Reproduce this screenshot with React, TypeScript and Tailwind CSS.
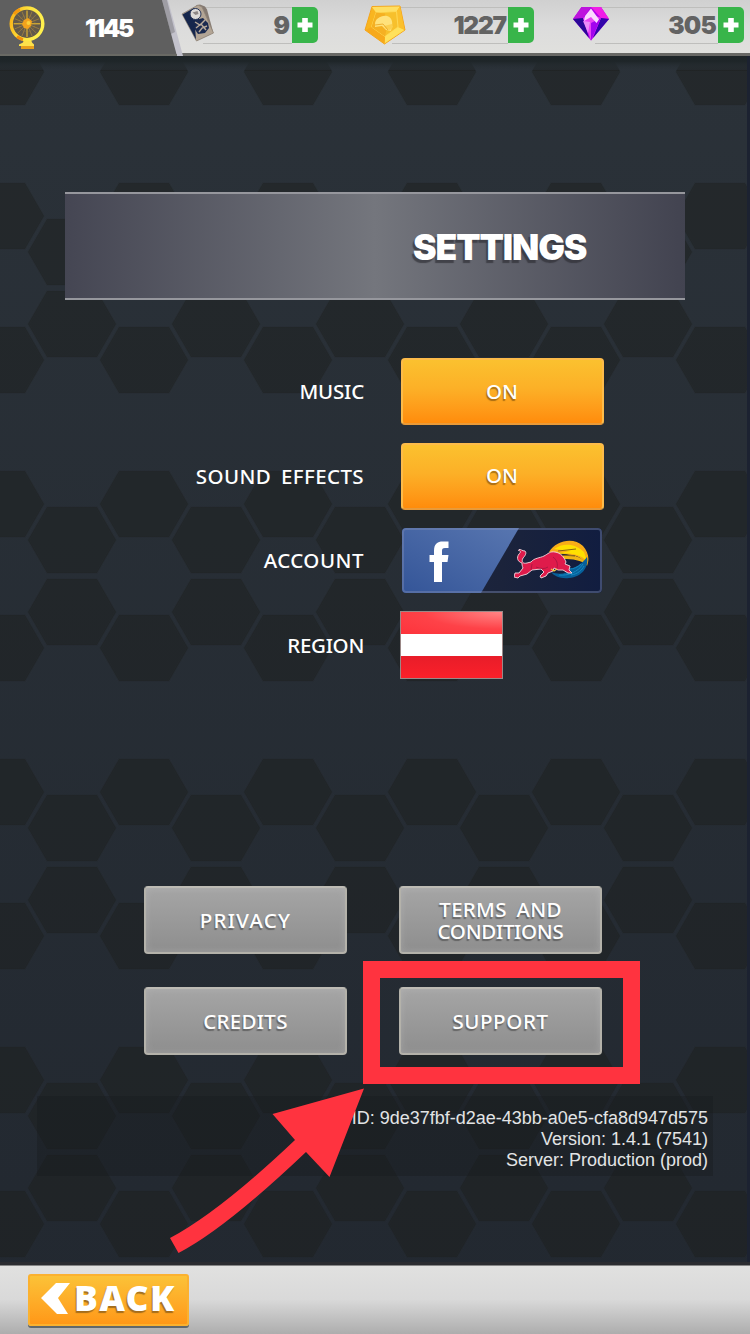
import React from "react";

const HEX = "-44,0 -25,-33 25,-33 44,0 25,33 -25,33";
const HEX_CENTRES = [
  [0, 72], [144, 72], [0, 216], [144, 216], [72, 36], [72, 252],
];

function HexBackdrop() {
  return (
    <svg className="absolute inset-0 h-full w-full" width="750" height="1334">
      <defs>
        <linearGradient id="base" x1="0" y1="0" x2="0" y2="1">
          <stop offset="0" stopColor="#2b3239" />
          <stop offset="1" stopColor="#222830" />
        </linearGradient>
        <linearGradient id="topShade" x1="0" y1="0" x2="0" y2="1">
          <stop offset="0" stopColor="#1d2427" />
          <stop offset="0.4" stopColor="#1f2629" />
          <stop offset="1" stopColor="#2b3239" stopOpacity="0" />
        </linearGradient>
        <pattern id="hex" width="144" height="288" patternUnits="userSpaceOnUse">
          {HEX_CENTRES.map(([x, y], i) => (
            <polygon key={i} points={HEX} transform={`translate(${x} ${y})`} fill="#1b1e1b" fillOpacity="0.44" stroke="#1b1e1b" strokeOpacity="0.08" strokeWidth="2" />
          ))}
        </pattern>
      </defs>
      <rect width="750" height="1334" fill="url(#base)" />
      <rect y="70" width="750" height="1264" fill="url(#hex)" />
      {[0, 144, 288, 432, 576, 720].map((x) => (
        <path key={x} d={`M${x - 44} 71L${x - 35} 56H${x + 35}L${x + 44} 71z`} fill="#1b1e1b" fillOpacity="0.44" />
      ))}
      <rect y="55" width="750" height="16" fill="url(#topShade)" />
      <rect x="747" width="3" height="1334" fill="#1c2231" />
    </svg>
  );
}

function WheelIcon() {
  const spokes = Array.from({ length: 16 }, (_, i) => i * 22.5);
  return (
    <svg width="36" height="44" viewBox="0 0 36 44">
      <defs>
        <linearGradient id="gold" x1="0" y1="0" x2="1" y2="0.3">
          <stop offset="0" stopColor="#f9ae13" />
          <stop offset="0.5" stopColor="#fde13c" />
          <stop offset="1" stopColor="#fff04d" />
        </linearGradient>
      </defs>
      <path d="M15 34h7l1 4 2 1v4H12v-4l2-1z" fill="#e8a01d" />
      <path d="M15 34h7l1 2.500 2 2v1.500H10v-1.500l4-2z" fill="#fde14b" />
      <circle cx="18" cy="17.8" r="15.8" fill="#62594a" stroke="url(#gold)" strokeWidth="3.4" />
      {spokes.map((a) => (
        <path key={a} d="M18 17.8V4.5" stroke={a % 90 === 0 ? "#f8c52d" : "#b08b3d"} strokeWidth={a % 90 === 0 ? 1 : 0.6} transform={`rotate(${a} 18 17.8)`} />
      ))}
      <circle cx="18" cy="17.8" r="8" fill="none" stroke="#a58542" strokeWidth="0.6" strokeDasharray="1 1" />
      <path d="M15 14l4-2 4 3-1 5-3 3-4-1-2-4z" fill="#f2a21c" />
      <circle cx="19.5" cy="17" r="2" fill="#fbd03a" />
      <path d="M8 30.500a16 16 0 0 0 6 3" stroke="#f08c0b" strokeWidth="3" fill="none" />
      <path d="M5 8a16 16 0 0 1 6-4.500" stroke="#f6980c" strokeWidth="3" fill="none" />
    </svg>
  );
}

function CardIcon() {
  return (
    <svg width="36" height="40" viewBox="0 0 36 40">
      <path d="M15 2.500l4-1 5 2 2 3 6 22-3 3-13 6z" fill="#857a72" />
      <path d="M1 11L17 2l4 2L32.500 30 15.500 38z" fill="#b3a595" stroke="#8f8477" strokeWidth="0.800" strokeLinejoin="round" />
      <path d="M1.500 11.500L13 5l4 8 2 8-5 3 1 12.500z" fill="#15264c" />
      <circle cx="14.500" cy="11" r="5.500" fill="#dcdad8" stroke="#243357" />
      <path d="M11.500 9.500l5-1.500 1 3-3 1z" fill="#8d8786" />
      <path d="M15 17l7-2 5 5 1 5-4 5-7 1-4-6 2-3z" fill="#1b2a4f" />
      <path d="M14 19l5 3 5-5M15 25l5-4 5 6M18 29l3-4 5-2" fill="none" stroke="#b8aa9b" strokeWidth="1.400" />
    </svg>
  );
}

function CoinIcon() {
  return (
    <svg width="42" height="40" viewBox="0 0 42 40">
      <path d="M8 1.500L36 1l5 24-20.500 14L1 25z" fill="#f9b51f" stroke="#f5a51c" strokeLinejoin="round" />
      <path d="M8 2l28-.5-3.500 5-20.500 1z" fill="#ffdf63" />
      <path d="M36 1.500l4.500 23-6.500-2.500-1.500-15.500z" fill="#fbc02d" />
      <path d="M40.500 25L20.500 38.500l.5-7L34 22z" fill="#ffe15c" />
      <path d="M1.500 25l19 13.500.5-7L7.500 22z" fill="#f7a91c" />
      <path d="M12 7.500l20.500-1L34 22l-13 9.500L7.500 22z" fill="#f7c02c" stroke="#ffdf62" strokeWidth="0.800" />
      <path d="M12 7.500l9 1 2 14-2 9L7.500 22z" fill="#f5b022" />
      <path d="M11 19c0-5 6-9 12-8 4 1 6 5 5 10l-1 5-5-1-4-4-7 1z" fill="#ffe27b" />
      <path d="M20 21l8-2 1 3-3 3-4-1z" fill="#fbcf50" />
      <path d="M11 20l8-1 5 6" fill="none" stroke="#e9a321" strokeWidth="0.800" />
    </svg>
  );
}

function GemIcon() {
  return (
    <svg width="36" height="35" viewBox="0 0 36 35">
      <path d="M8.500 1L28 1l8 12-18 21.500L0 13z" fill="#b400ea" />
      <path d="M8.500 1L18 1l-8 11-10 1z" fill="#bd15dd" />
      <path d="M28 1l8 12-8-1L18 1z" fill="#f01de6" />
      <path d="M0 13l10-1 6 20z" fill="#2b0897" />
      <path d="M36 13l-8-1-8 20z" fill="#3205aa" />
      <path d="M10 12l8-4 10 4-10 22.500z" fill="#e943f5" />
      <path d="M18 17l10-5-10 22.500z" fill="#a205ee" />
      <path d="M18 2.500l8 11-2.500 3.500L18 11l-7 4 1-5z" fill="#fbd9ff" />
      <path d="M10 15l7 1-2 11z" fill="#ed8cfa" />
    </svg>
  );
}

function PlusBadge() {
  return (
    <div className="flex h-[36px] w-[26px] shrink-0 items-center justify-center rounded-r-[5px] bg-[#38b54a]">
      <svg width="16" height="16" viewBox="0 0 16 16">
        <path d="M5.200 1h5.600v4.500H15.500v5H10.800V15H5.200V10.500H.500v-5H5.200z" fill="#fff" />
      </svg>
    </div>
  );
}

function Counter({ icon, value, className, valueClass }: { icon: React.ReactNode; value: string; className: string; valueClass: string }) {
  return (
    <div className={`flex h-[50px] shrink-0 items-center ${className}`}>
      <div className="z-10 -mr-[14px] shrink-0">{icon}</div>
      <div className="flex h-[37px] flex-1 items-center justify-end border-y border-[#bebebc] text-[24.500px] leading-none font-black text-[#636363]">
        <span className={valueClass}>{value}</span>
      </div>
      <PlusBadge />
    </div>
  );
}

function Header() {
  return (
    <header className="relative flex h-[56px] shrink-0 border-b-[3px] border-[#686865] bg-linear-to-b from-[#d0d0d0] via-[#dcdcdc] to-[#e0e0dd] font-['Inter',sans-serif]">
      <svg className="absolute top-0 left-0" width="200" height="56">
        <path d="M0 0H168L183 56H0z" fill="#c3c2cc" />
        <path d="M162 0h5l8 32-4 2z" fill="#9e9da4" />
        <path d="M0 0H162L177 56H0z" fill="#5f5f5f" />
        <path d="M0 54H177v2H0z" fill="#696964" />
      </svg>
      <div className="relative flex w-[181px] items-start pt-[6px] pl-[9px]">
        <WheelIcon />
        <span className="mt-[10px] ml-[40px] text-[24.500px] leading-none font-black tracking-[-2.100px] text-white [font-kerning:none]">1145</span>
      </div>
      <Counter className="w-[137px]" icon={<div className="-mt-[4px]"><CardIcon /></div>} value="9" valueClass="mr-[2px]" />
      <Counter className="ml-[46px] w-[170px]" icon={<CoinIcon />} value="1227" valueClass="mr-[2px] tracking-[-1.200px]" />
      <Counter className="ml-[39px] w-[171px]" icon={<div className="-mt-[4px]"><GemIcon /></div>} value="305" valueClass="tracking-[-0.800px] mr-[2px]" />
    </header>
  );
}

function ToggleButton() {
  return (
    <button className="ml-[0.500px] h-[67px] w-[203px] rounded-[4px] border-2 border-[#fdbb4a] border-b-[#e99a38] bg-linear-to-b from-[#fbc12f] via-[#fcb027] via-45% to-[#ff8c0b] pb-px text-[20.500px] leading-none font-medium text-white [text-shadow:-1px_2px_1px_rgba(110,70,10,0.6)]">
      ON
    </button>
  );
}

function BullLogo() {
  return (
    <svg width="76" height="44" viewBox="0 0 76 44">
      <path d="M35 13C42 1 60-2 69 7c5 6 7 12 4 20-3-6-8-10-15-11-8-1-13-2-23-3z" fill="#f9ad18" />
      <path d="M40 10c10-7 22-5 30 3l3 9c-8-8-20-8-31-7l14-3z" fill="#ffe000" />
      <path d="M46 17c9-2 18-1 24 5l3 4c-6-5-14-6-24-6z" fill="#f0b515" />
      <path d="M47 16l14 1M44 12l18-2" stroke="#694d18" strokeWidth="0.800" />
      <path d="M73 18c2 10-5 20-18 21-8 1-15-2-18-6 8 3 16 2 19-3 5-1 12-5 17-12z" fill="#07609a" />
      <path d="M45 36c9 1 19-3 24-11M57 36c7-1 11-5 13-9M55 30c5 0 9-2 12-5" fill="none" stroke="#1488c0" strokeWidth="1" />
      <path d="M5 10.500c2-.5 3 1.500 6 1.500 2 2 0 5-2 7-2 4 0 6 4 5l4-1c3-4 9-4 13-6 4-2 6-5 11-4 6 1 9 5 11 10l-1 2 5 2-1 4 3 3-4 0-5-3-5 0-4-2-1 3-5 2-2 3-5 2-1-2 4-4-3-3-9 1-5 4-7 2-2 2-4-1 1-4 4 0 4-5c-1-2-1-4-1-5-4-1-6-5-3-9 2-2 2-3-.500-3.500z" fill="#df1b4b" stroke="#f4dbe2" strokeWidth="0.900" strokeLinejoin="round" />
      <path d="M18 25l-1 6M22 28c5 2 9 2 12 0M39 18c4 3 5 7 4 11" fill="none" stroke="#a21540" strokeWidth="0.800" />
      <path d="M37 30l3 2 3-2" fill="none" stroke="#f3c743" strokeWidth="1.200" />
    </svg>
  );
}

function AccountButton() {
  return (
    <button className="relative ml-[2px] flex h-[65px] w-[200px] items-center overflow-hidden rounded-[4px] bg-linear-to-r from-[#1c2741] via-[#1b233b] to-[#111d40]">
      <svg className="absolute inset-0" width="200" height="65">
        <defs>
          <linearGradient id="fb" x1="0" x2="1" y1="1" y2="0">
            <stop offset="0" stopColor="#345598" />
            <stop offset="1" stopColor="#5876b0" />
          </linearGradient>
        </defs>
        <path d="M0 0H117L79 65H0z" fill="url(#fb)" />
        <rect x="1" y="1" width="198" height="63" rx="3" fill="none" stroke="#8491b8" strokeOpacity="0.400" strokeWidth="2" />
        <path d="M28 54V34h-4.500v-7H28v-4c0-7 3-9.500 9-9.500h5.500V20H39c-2.500 0-3 1-3 3v4h6.500l-1 7H36v20z" fill="#fff" transform="translate(4 0)" />
      </svg>
      <div className="relative ml-[112px]"><BullLogo /></div>
    </button>
  );
}

function AustrianFlag() {
  return (
    <div className="flex h-[68px] w-[103px] flex-col border border-[#9a8887]">
      <div className="h-[22px] bg-[radial-gradient(ellipse_at_top_right,#ff8585,#fe4248_55%,#fd333b)]" />
      <div className="flex-1 bg-white" />
      <div className="h-[22px] bg-linear-to-b from-[#e81d29] to-[#fb202a]" />
    </div>
  );
}

function SettingRow({ label, labelClass, className, children }: { label: string; labelClass: string; className: string; children: React.ReactNode }) {
  return (
    <div className={`flex items-center ${className}`}>
      <div className="flex w-[364px] justify-end text-[20.500px] leading-none font-medium whitespace-nowrap text-white">
        <span className={labelClass}>{label}</span>
      </div>
      <div className="ml-[36px]">{children}</div>
    </div>
  );
}

function GreyButton({ children, className }: { children: React.ReactNode; className: string }) {
  return (
    <button className={`flex h-[68px] w-[203px] flex-col items-center justify-center rounded-[4px] border-2 border-[#b4b2aa] border-t-[#bdbbb4] bg-linear-to-b from-[#a5a5a5] to-[#8e8e8e] text-[20.500px] leading-[22px] font-medium whitespace-nowrap text-white shadow-[inset_0_0_7px_rgba(200,200,200,0.350)] [text-shadow:-1px_2px_1px_rgba(60,60,60,0.550)] ${className}`}>
      {children}
    </button>
  );
}

export default function App() {
  return (
    <div className="relative flex h-[1334px] w-[750px] flex-col overflow-hidden bg-[#262d34] font-['Noto_Sans',sans-serif]">
      <HexBackdrop />
      <Header />

      <main className="relative flex flex-1 flex-col">
        <h1 className="mt-[136px] ml-[65px] flex h-[108px] w-[620px] items-center border-y-2 border-[#96979d] bg-linear-to-r from-[#454653] via-[#74767d] to-[#424350] pt-[3px] pl-[348px] font-['Inter',sans-serif] text-[35.500px] leading-none font-black text-white [text-shadow:-2px_3px_1px_rgba(45,45,50,0.650)]">
          <span className="tracking-[-1.100px]">SETTINGS</span>
        </h1>

        <section className="mt-[49px] h-[340px]">
          <SettingRow className="h-[85px]" label="MUSIC" labelClass="tracking-[-0.200px]"><ToggleButton /></SettingRow>
          <SettingRow className="h-[84px]" label="SOUND EFFECTS" labelClass="tracking-[0.400px] [word-spacing:4px]"><ToggleButton /></SettingRow>
          <SettingRow className="h-[85px]" label="ACCOUNT" labelClass="tracking-[0.500px]"><AccountButton /></SettingRow>
          <SettingRow className="h-[84px]" label="REGION" labelClass="tracking-[-0.300px]"><AustrianFlag /></SettingRow>
        </section>

        <section className="mt-[197px] ml-[144px] grid w-[458px] grid-cols-[203px_203px] justify-between gap-y-[33px]">
          <GreyButton className="tracking-[1.300px]">PRIVACY</GreyButton>
          <GreyButton className="">
            <span className="tracking-[0.300px] [word-spacing:4px]">TERMS AND</span>
            <span className="tracking-[-0.300px]">CONDITIONS</span>
          </GreyButton>
          <GreyButton className="tracking-[0.300px]">CREDITS</GreyButton>
          <GreyButton className="tracking-[0.600px]">SUPPORT</GreyButton>
        </section>

        <section className="mt-[41px] ml-[37px] h-[80px] w-[676px] bg-[#181b1c]/35 pt-[12px] pr-[5px] text-right font-['Liberation_Sans',sans-serif] text-[18px] leading-[21px] text-[#e2e4e5]">
          <p>ID: 9de37fbf-d2ae-43bb-a0e5-cfa8d947d575</p>
          <p>Version: 1.4.1 (7541)</p>
          <p>Server: Production (prod)</p>
        </section>
      </main>

      <footer className="relative flex h-[72px] shrink-0 items-start border-t-[3px] border-[#2b2c30] bg-linear-to-b from-[#e1e1e0] via-[#d9d9d9] via-50% to-[#adadad] pt-[9px] pl-[28px] shadow-[inset_0_1px_0_#858585]">
        <button className="flex h-[52px] w-[161px] items-center rounded-[3px] border-2 border-[#fbb12f] bg-linear-to-b from-[#fbc237] to-[#ff9817] pb-[4px] pl-[11px] text-[35.500px] leading-none font-black text-white shadow-[0_2px_0_#61686b]">
          <svg width="29" height="32" viewBox="0 0 29 32">
            <path d="M15 1H29L17 16L27 32H16L0 16z" fill="#fff" />
          </svg>
          <span className="ml-[4px] tracking-[1.300px] [text-shadow:-1px_2px_1px_rgba(125,85,25,0.700)]">BACK</span>
        </button>
      </footer>

      <div className="absolute top-[961px] left-[363px] h-[123px] w-[277px] border-[17px] border-[#ff333f]" />
      <svg className="absolute top-[1080px] left-[160px]" width="220" height="180" viewBox="160 1080 220 180">
        <path d="M364 1088.500L272.500 1114L295 1140Q219 1212 170 1238L178.500 1253Q225 1229 306 1152L329.500 1177z" fill="#ff333f" />
      </svg>
    </div>
  );
}
